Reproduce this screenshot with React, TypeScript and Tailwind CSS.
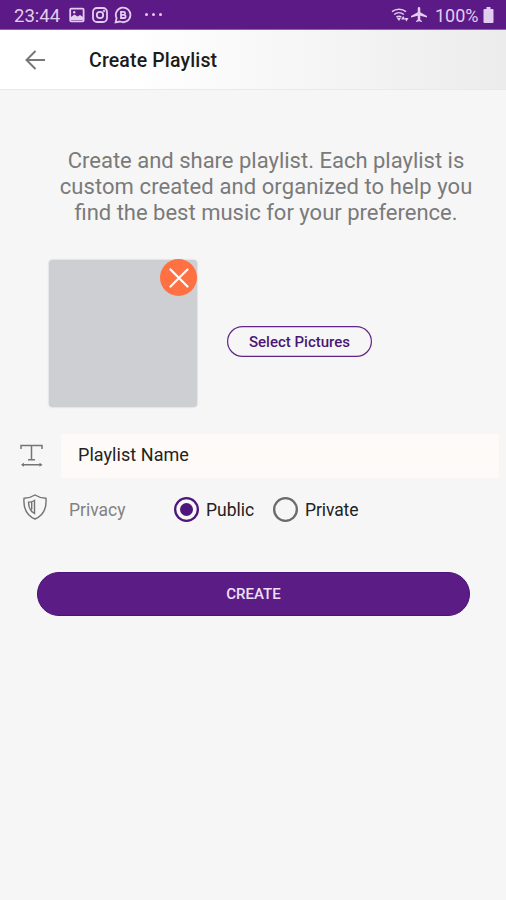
import React from "react";

function StatusBar() {
  return (
    <div className="flex h-[30px] items-center border-b border-[#8d62ab] bg-[#5b1a86] pl-[14px] pr-[12px] text-[#e3cdef]">
      <span className="w-[55px] whitespace-nowrap pt-[2px] text-[18.5px] leading-[30px]">23:44</span>
      <svg className="h-[16px] w-[16px]" viewBox="0 0 16 16" fill="none">
        <rect x="1.2" y="1.7" width="13.4" height="12.6" rx="1" stroke="currentColor" strokeWidth="1.8" />
        <path d="M2 13V10L5.500 7.500l3 2L11 8l3 2v3Z" fill="currentColor" />
        <circle cx="5.2" cy="5.2" r="1.2" fill="currentColor" />
      </svg>
      <svg className="ml-[7px] h-[16px] w-[16px]" viewBox="0 0 16 16" fill="none" stroke="currentColor" strokeWidth="1.8">
        <rect x="1" y="1" width="14" height="14" rx="4" />
        <circle cx="8" cy="8" r="3.2" />
        <circle cx="12" cy="4" r=".4" />
      </svg>
      <svg className="ml-[6px] h-[18px] w-[18px]" viewBox="0 0 18 18" fill="none" stroke="currentColor" strokeWidth="1.8">
        <path d="m1.6 16.4 1-4.2A7.3 7.3 0 1 1 6 15.500Z" />
        <path d="M7 5.8h2.6a1.5 1.5 0 0 1 0 3H7Zm0 3h3a1.6 1.6 0 0 1 0 3.2H7Z" />
      </svg>
      <span className="ml-[13px] flex gap-[4px]">
        <i className="h-[3px] w-[3px] rounded-full bg-current" />
        <i className="h-[3px] w-[3px] rounded-full bg-current" />
        <i className="h-[3px] w-[3px] rounded-full bg-current" />
      </span>
      <svg className="ml-auto h-[16px] w-[20px]" viewBox="0 0 20 16" fill="none" stroke="currentColor" strokeWidth="1.6">
        <path d="M1 4.700a11 11 0 0 1 14 0M3.200 7.500a7.600 7.600 0 0 1 9.600 0M5.400 10.200a4.600 4.600 0 0 1 5 0" />
        <path d="m5.800 11 2.200 3 1.800-3Z" fill="currentColor" stroke="none" />
        <path d="m10 12.500 2.200-3.500 2.200 3.500ZM13.200 11l2.200 3.500 2.200-3.500Z" fill="currentColor" stroke="none" />
      </svg>
      <svg className="h-[15px] w-[16px]" viewBox="2 2 19 20" preserveAspectRatio="none" fill="currentColor">
        <path d="M21 16v-2l-8-5V3.500a1.500 1.500 0 0 0-3 0V9l-8 5v2l8-2.500V19l-2 1.500V22l3.500-1 3.500 1v-1.500L13 19v-5.500z" />
      </svg>
      <span className="ml-[8px] w-[48px] whitespace-nowrap pt-[2px] text-[18px] leading-[30px]">100%</span>
      <svg className="h-[16px] w-[11px]" viewBox="0 0 11 16" fill="currentColor">
        <path d="M3.500 0h4v2H9.500a1 1 0 0 1 1 1v12a1 1 0 0 1-1 1h-8a1 1 0 0 1-1-1V3a1 1 0 0 1 1-1h2Z" />
      </svg>
    </div>
  );
}

function Header() {
  return (
    <header className="flex h-[60px] items-center border-b border-[#e9e9e9] bg-linear-to-r from-white from-25% to-[#ececec] pl-[25px]">
      <svg className="h-[20px] w-[20px]" viewBox="0 0 20 20" fill="none" stroke="#777" strokeWidth="2">
        <path d="M20 10H2M10.500 1 1.500 10l9 9" />
      </svg>
      <h1 className="ml-[44px] whitespace-nowrap pt-[2px] text-[19.5px] font-medium leading-[24px] tracking-[0.15px] text-[#1c1c1c]">Create Playlist</h1>
    </header>
  );
}

export default function App() {
  return (
    <div className="flex h-[900px] w-[506px] flex-col overflow-hidden bg-[#f6f6f6] font-['Roboto',sans-serif]">
      <StatusBar />
      <Header />
      <p className="ml-[26px] mt-[58px] h-[78px] whitespace-nowrap text-center text-[22px] leading-[26px] text-[#7a7a7a]">
        Create and share playlist. Each playlist is
        <br />
        <span className="tracking-[0.09px]">custom created and organized to help you</span>
        <br />
        find the best music for your preference.
      </p>
      <div className="ml-[49px] mt-[34px] flex h-[147px] items-start">
        <div className="flex h-[147px] w-[148px] justify-end rounded-[4px] bg-[#cdcfd2] shadow-[0_0_2px_#bbb]">
          <div className="-mt-px flex h-[37px] w-[37px] items-center justify-center rounded-full bg-[#ff7043]">
            <svg className="h-[20px] w-[20px]" viewBox="0 0 20 20" fill="none" stroke="#fff" strokeWidth="2.200" strokeLinecap="round">
              <path d="m1.500 1.500 17 17M18.500 1.500l-17 17" />
            </svg>
          </div>
        </div>
        <button className="ml-[30px] mt-[66px] h-[31px] w-[145px] whitespace-nowrap rounded-full pt-px text-[15px] font-medium text-[#4a1676] inset-ring-[1.2px] inset-ring-[#5e2787]">
          Select Pictures
        </button>
      </div>
      <div className="mt-[27px] flex h-[44px] items-center pl-[20px]">
        <svg className="h-[24px] w-[24px]" viewBox="0 0 24 24" fill="none" stroke="#757575" strokeWidth="1.500">
          <path d="M1 5V1.500h21V5M11.500 1.500v14M8 15.700h7M2 20.800h19" />
          <path d="m4 18.800-3 2 3 2ZM19.500 18.800l3 2-3 2Z" fill="#757575" stroke="none" />
        </svg>
        <div className="ml-[17px] flex h-[44px] w-[438px] items-center bg-[#fefaf8] pl-[17px]">
          <span className="-mt-[3px] whitespace-nowrap text-[18px] leading-[24px] tracking-[0.05px] text-[#222]">Playlist Name</span>
        </div>
      </div>
      <div className="mt-[18px] flex h-[28px] items-center pl-[22px] text-[17.5px] text-[#222]">
        <svg className="-mt-[6px] h-[26px] w-[26px]" viewBox="0 0 26 26" fill="none" stroke="#737373" strokeWidth="1.400">
          <path d="M13 1c3.500 2.300 7 3 11 3.300C24.700 14 21.500 21.500 13 25 4.500 21.500 1.300 14 2 4.300 6 4 9.500 3.300 13 1Z" />
          <path d="M12.500 6.500v13C8 17 6.500 13 6.500 8.300c2.300-.1 4-.6 6-1.800ZM9.700 8v7.500" />
        </svg>
        <span className="ml-[21px] w-[104.5px] whitespace-nowrap pt-px text-[#828282]">Privacy</span>
        <span className="-mt-px flex h-[25px] w-[25px] items-center justify-center rounded-full inset-ring-[2.3px] inset-ring-[#50157b]">
          <i className="h-[13px] w-[13px] rounded-full bg-[#50157b]" />
        </span>
        <span className="ml-[7.5px] w-[66.5px] whitespace-nowrap pt-px">Public</span>
        <span className="-mt-px h-[25px] w-[25px] rounded-full inset-ring-[2.3px] inset-ring-[#6b6b6b]" />
        <span className="ml-[7.5px] whitespace-nowrap pt-px tracking-[-0.1px]">Private</span>
      </div>
      <button className="ml-[37px] mt-[48px] h-[44px] w-[433px] rounded-full border border-[#4b1177] bg-[#5b1c85] pt-px text-[15px] font-medium text-[#eee0f5]">
        CREATE
      </button>
    </div>
  );
}
